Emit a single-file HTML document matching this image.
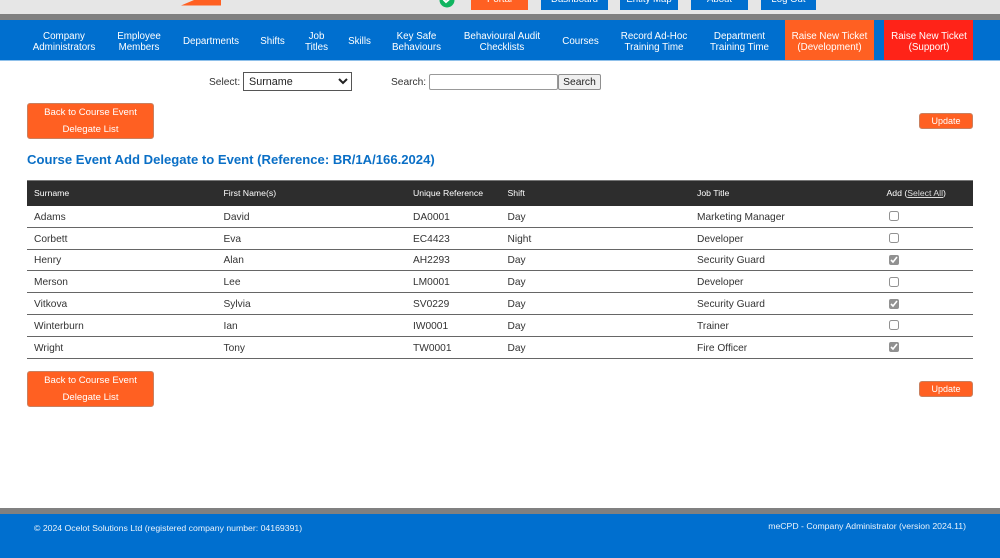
<!DOCTYPE html>
<html lang="en">
<head>
<meta charset="utf-8">
<title>Course Event Add Delegate to Event</title>
<style>
html,body{margin:0;padding:0;}
body{position:relative;width:1000px;height:558px;overflow:hidden;background:#fff;font-family:"Liberation Sans",Arial,sans-serif;color:#333;}
.a{position:absolute;}
.top{left:0;top:0;width:1000px;height:15px;background:#e6e6e6;}
.grey1{left:0;top:14px;width:1000px;height:6px;background:#808080;}
.tb{top:0;height:10px;overflow:hidden;color:#fff;font-size:9.6px;line-height:0;text-align:center;background:#006fcf;}
.tb span{position:relative;top:0;display:block;line-height:0;padding-top:0;}
.nav{left:0;top:20px;width:1000px;height:40px;background:#006fcf;border-bottom:1px solid #8fc0ea;box-sizing:content-box;}
.ni{top:21.5px;height:40px;display:flex;align-items:center;justify-content:center;text-align:center;color:#fff;font-size:9.8px;line-height:11px;white-space:nowrap;transform:translateX(-50%);}
.ni.o{top:21px;}
.btn{box-sizing:border-box;background:#ff6022;border:1px solid #c9805f;border-radius:3px;color:#fff;text-align:center;font-size:9.6px;}
.back{left:27px;width:127px;height:36px;line-height:17px;padding-top:0;}
.upd{left:919px;width:54px;height:16px;line-height:14px;font-size:9px;}
.lab{font-size:10.2px;color:#333;line-height:14px;white-space:nowrap;}
select{position:absolute;left:243px;top:72px;width:109px;height:19px;box-sizing:border-box;font-family:"Liberation Sans",Arial,sans-serif;font-size:10.8px;color:#222;background:#fff;border:1px solid #555;border-radius:0;padding:0 0 0 1px;}
input.s{position:absolute;left:429px;top:74px;width:129px;height:16px;box-sizing:border-box;border:1px solid #999;border-radius:2px;padding:0;background:#fff;}
button.s{position:absolute;left:558px;top:74px;width:43px;height:16px;box-sizing:border-box;border:1px solid #8f8f8f;border-radius:2px;padding:2px 0 0 0;background:#efefef;color:#222;font-family:"Liberation Sans",Arial,sans-serif;font-size:10.3px;line-height:12px;}
h1{position:absolute;left:27px;top:152px;margin:0;font-size:13.1px;line-height:16px;font-weight:bold;color:#0a6fc6;white-space:nowrap;}
table{position:absolute;left:27px;top:180px;width:946px;border-collapse:collapse;table-layout:fixed;font-size:10.2px;color:#333;}
th{background:#2d2d2d;color:#fff;height:25px;padding:0 0 0 7px;font-size:8.7px;font-weight:normal;text-align:left;border-top:1px solid #777;box-sizing:border-box;}
th u{color:#ddd;}
td{height:21.8px;padding:2px 0 0 7px;border-bottom:1px solid #666;box-sizing:border-box;white-space:nowrap;}
td input{display:block;margin:-2px 0 0 2px;width:10px;height:10px;accent-color:#767676;opacity:.8;}
.foot1{left:0;top:508px;width:1000px;height:6px;background:#808080;}
.foot2{left:0;top:514px;width:1000px;height:44px;background:#006fcf;}
.ft{color:#eaf3fb;font-size:8.7px;line-height:12px;white-space:nowrap;}
</style>
</head>
<body>
<div class="a top" style="background:#e6e6e6"></div>
<svg class="a" style="left:175px;top:0" width="50" height="8"><polygon points="6,5.5 19,0 46,0 46,5.5" fill="#ff6022"/></svg>
<svg class="a" style="left:438px;top:0" width="18" height="9"><circle cx="9" cy="0" r="7.5" fill="#10b560"/><path d="M5.5 -0.5 L8 2 L12.5 -2" fill="none" stroke="#fff" stroke-width="2"/></svg>
<div class="a tb" style="left:471px;width:57px;background:#ff6022"><span>Portal</span></div>
<div class="a tb" style="left:541px;width:67px"><span>Dashboard</span></div>
<div class="a tb" style="left:620px;width:58px"><span>Entity Map</span></div>
<div class="a tb" style="left:691px;width:57px"><span>About</span></div>
<div class="a tb" style="left:761px;width:55px"><span>Log Out</span></div>
<div class="a grey1"></div>
<div class="a nav"></div>
<div class="a" style="left:785px;top:20px;width:89px;height:40px;background:#ff6022"></div>
<div class="a" style="left:884px;top:20px;width:89px;height:40px;background:#ff2318"></div>
<div class="a ni" style="left:64px">Company<br>Administrators</div>
<div class="a ni" style="left:139px">Employee<br>Members</div>
<div class="a ni o" style="left:211px">Departments</div>
<div class="a ni o" style="left:272.5px">Shifts</div>
<div class="a ni" style="left:316.5px">Job<br>Titles</div>
<div class="a ni o" style="left:359.5px">Skills</div>
<div class="a ni" style="left:416.5px">Key Safe<br>Behaviours</div>
<div class="a ni" style="left:502px">Behavioural Audit<br>Checklists</div>
<div class="a ni o" style="left:580.5px">Courses</div>
<div class="a ni" style="left:654px">Record Ad-Hoc<br>Training Time</div>
<div class="a ni" style="left:739.5px">Department<br>Training Time</div>
<div class="a ni" style="left:829.5px">Raise New Ticket<br>(Development)</div>
<div class="a ni" style="left:929px">Raise New Ticket<br>(Support)</div>

<div class="a lab" style="left:209px;top:76px">Select:</div>
<select><option>Surname</option></select>
<div class="a lab" style="left:391px;top:76px">Search:</div>
<input class="s" type="text">
<button class="s">Search</button>

<div class="a btn back" style="top:103px">Back to Course Event<br>Delegate List</div>
<div class="a btn upd" style="top:113px">Update</div>

<h1>Course Event Add Delegate to Event (Reference: BR/1A/166.2024)</h1>

<table>
<colgroup><col style="width:189.5px"><col style="width:189.5px"><col style="width:94.5px"><col style="width:189.5px"><col style="width:189.5px"><col></colgroup>
<tr><th>Surname</th><th>First Name(s)</th><th>Unique Reference</th><th>Shift</th><th>Job Title</th><th>Add (<u>Select All</u>)</th></tr>
<tr><td>Adams</td><td>David</td><td>DA0001</td><td>Day</td><td>Marketing Manager</td><td><input type="checkbox"></td></tr>
<tr><td>Corbett</td><td>Eva</td><td>EC4423</td><td>Night</td><td>Developer</td><td><input type="checkbox"></td></tr>
<tr><td>Henry</td><td>Alan</td><td>AH2293</td><td>Day</td><td>Security Guard</td><td><input type="checkbox" checked></td></tr>
<tr><td>Merson</td><td>Lee</td><td>LM0001</td><td>Day</td><td>Developer</td><td><input type="checkbox"></td></tr>
<tr><td>Vitkova</td><td>Sylvia</td><td>SV0229</td><td>Day</td><td>Security Guard</td><td><input type="checkbox" checked></td></tr>
<tr><td>Winterburn</td><td>Ian</td><td>IW0001</td><td>Day</td><td>Trainer</td><td><input type="checkbox"></td></tr>
<tr><td>Wright</td><td>Tony</td><td>TW0001</td><td>Day</td><td>Fire Officer</td><td><input type="checkbox" checked></td></tr>
</table>

<div class="a btn back" style="top:371px">Back to Course Event<br>Delegate List</div>
<div class="a btn upd" style="top:381px">Update</div>

<div class="a foot1"></div>
<div class="a foot2"></div>
<div class="a ft" style="left:34px;top:522px">© 2024 Ocelot Solutions Ltd (registered company number: 04169391)</div>
<div class="a ft" style="right:34px;top:520px">meCPD - Company Administrator (version 2024.11)</div>
</body>
</html>
